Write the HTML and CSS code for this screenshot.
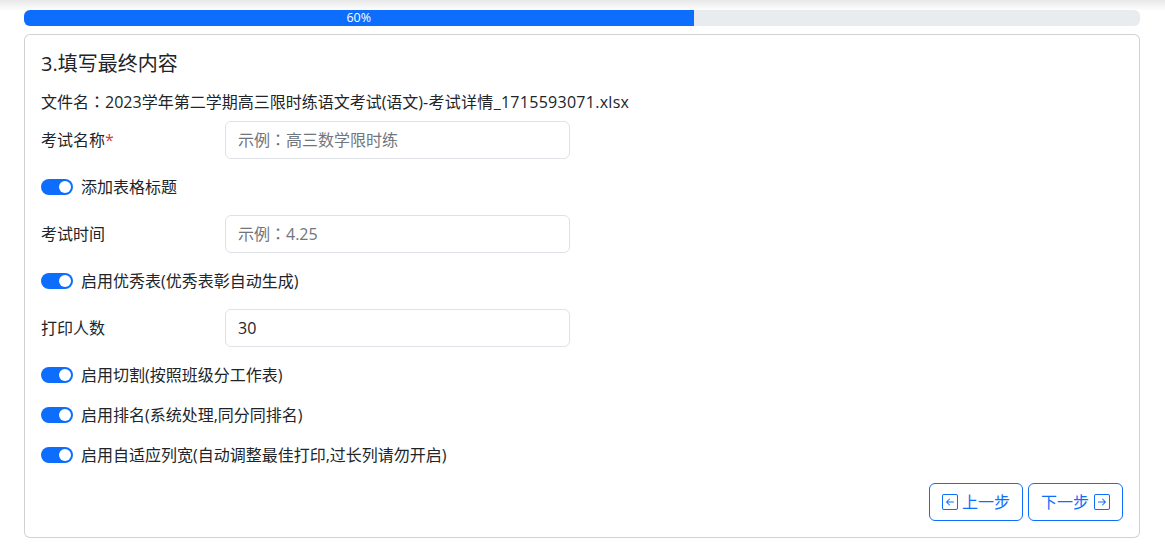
FILE: index.html
```html
<!DOCTYPE html>
<html lang="zh-CN">
<head>
<meta charset="utf-8">
<title>填写最终内容</title>
<link rel="stylesheet" href="styles.css">
</head>
<body>
<div class="top-shade"></div>
<main class="page">
  <div class="progress"><div class="progress-bar" style="width:60%">60%</div></div>
  <section class="card">
    <h5 class="title">3.填写最终内容</h5>
    <p class="file">文件名<span class="colon" lang="zh-TW">：</span>2023学年第二学期高三限时练语文考试(语文)<span class="file-tail">-考试详情_1715593071.xlsx</span></p>
    <div class="field">
      <label class="field-label">考试名称<span class="req">*</span></label>
      <input class="input" lang="zh-TW" placeholder="示例：高三数学限时练">
    </div>
    <div class="switch-row"><span class="switch"></span><span>添加表格标题</span></div>
    <div class="field">
      <label class="field-label">考试时间</label>
      <input class="input" lang="zh-TW" placeholder="示例：4.25">
    </div>
    <div class="switch-row"><span class="switch"></span><span>启用优秀表(优秀表彰自动生成)</span></div>
    <div class="field">
      <label class="field-label">打印人数</label>
      <input class="input" value="30">
    </div>
    <div class="switch-row"><span class="switch"></span><span>启用切割(按照班级分工作表)</span></div>
    <div class="switch-row"><span class="switch"></span><span>启用排名(系统处理,同分同排名)</span></div>
    <div class="switch-row"><span class="switch"></span><span>启用自适应列宽(自动调整最佳打印,过长列请勿开启)</span></div>
    <div class="actions">
      <button class="btn prev">
        <svg class="icon" viewBox="0 0 16 16" fill="currentColor"><path d="M14 0a2 2 0 0 1 2 2v12a2 2 0 0 1-2 2H2a2 2 0 0 1-2-2V2a2 2 0 0 1 2-2zM2 1a1 1 0 0 0-1 1v12a1 1 0 0 0 1 1h12a1 1 0 0 0 1-1V2a1 1 0 0 0-1-1z"/><path d="M12 8a.5.5 0 0 1-.5.5H5.707l2.147 2.146a.5.5 0 0 1-.708.708l-3-3a.5.5 0 0 1 0-.708l3-3a.5.5 0 1 1 .708.708L5.707 7.5H11.500A.5.5 0 0 1 12 8"/></svg>
        上一步
      </button>
      <button class="btn next">
        下一步
        <svg class="icon" viewBox="0 0 16 16" fill="currentColor"><path d="M14 0a2 2 0 0 1 2 2v12a2 2 0 0 1-2 2H2a2 2 0 0 1-2-2V2a2 2 0 0 1 2-2zM2 1a1 1 0 0 0-1 1v12a1 1 0 0 0 1 1h12a1 1 0 0 0 1-1V2a1 1 0 0 0-1-1z"/><path d="M4 8a.5.5 0 0 1 .5-.5h5.793L8.146 5.354a.5.5 0 1 1 .708-.708l3 3a.5.5 0 0 1 0 .708l-3 3a.5.5 0 0 1-.708-.708L10.293 8.500H4.500A.5.5 0 0 1 4 8"/></svg>
      </button>
    </div>
  </section>
</main>
</body>
</html>
```

FILE: styles.css
```css
* { box-sizing: border-box; }
html, body { margin: 0; padding: 0; }
body {
  background: #fff;
  color: #212529;
  font-family: "Open Sans", "Noto Sans CJK SC", sans-serif;
  font-size: 16px;
  line-height: 24px;
  position: relative;
}
.top-shade {
  position: absolute;
  left: 0; right: 0; top: 0;
  height: 11px;
  background: linear-gradient(#e8e8e8, #ffffff);
}
.page { padding: 10px 25px 12px 24px; position: relative; }
.progress {
  height: 16px;
  background: #e9ecef;
  border-radius: 6px;
  overflow: hidden;
  margin-bottom: 8px;
}
.progress-bar {
  height: 100%;
  background: #0d6efd;
  color: #fff;
  font-size: 12.5px;
  line-height: 16px;
  text-align: center;
}
.card {
  border: 1px solid rgba(0,0,0,.175);
  border-radius: 6px;
  padding: 16px;
  background: #fff;
}
.title { margin: 1px 0 14px; font-size: 20px; line-height: 24px; font-weight: 400; }
.file { margin: 0 0 7px; }
.colon { font-family: "Noto Sans CJK TC", sans-serif; line-height: 1; }
.file-tail { letter-spacing: .28px; }
.field { display: flex; align-items: center; margin-bottom: 16px; }
.field-label { width: 184px; flex: none; }
.req { color: #dc3545; }
.input {
  width: 345px;
  height: 38px;
  padding: 6px 12px;
  border: 1px solid #dee2e6;
  border-radius: 6px;
  font: inherit;
  color: #212529;
  background: #fff;
  outline: none;
}
.input::placeholder { color: #6f767d; opacity: 1; font-family: "Open Sans", "Noto Sans CJK TC", sans-serif; }
.switch-row { display: flex; align-items: center; gap: 8px; margin-bottom: 16px; height: 24px; }
.switch {
  position: relative;
  width: 32px;
  height: 16px;
  border-radius: 8px;
  background: #0d6efd;
  flex: none;
}
.switch::after {
  content: "";
  position: absolute;
  right: 2px; top: 2px;
  width: 12px; height: 12px;
  border-radius: 50%;
  background: #fff;
}
.actions { display: flex; justify-content: flex-end; gap: 5px; }
.btn {
  display: inline-flex;
  align-items: center;
  justify-content: center;
  gap: 4px;
  height: 38px;
  padding: 0 12px;
  border: 1px solid #0d6efd;
  border-radius: 6px;
  background: #fff;
  color: #0d6efd;
  font: inherit;
}
.next { gap: 5px; }
.icon { width: 16px; height: 16px; flex: none; }
```
